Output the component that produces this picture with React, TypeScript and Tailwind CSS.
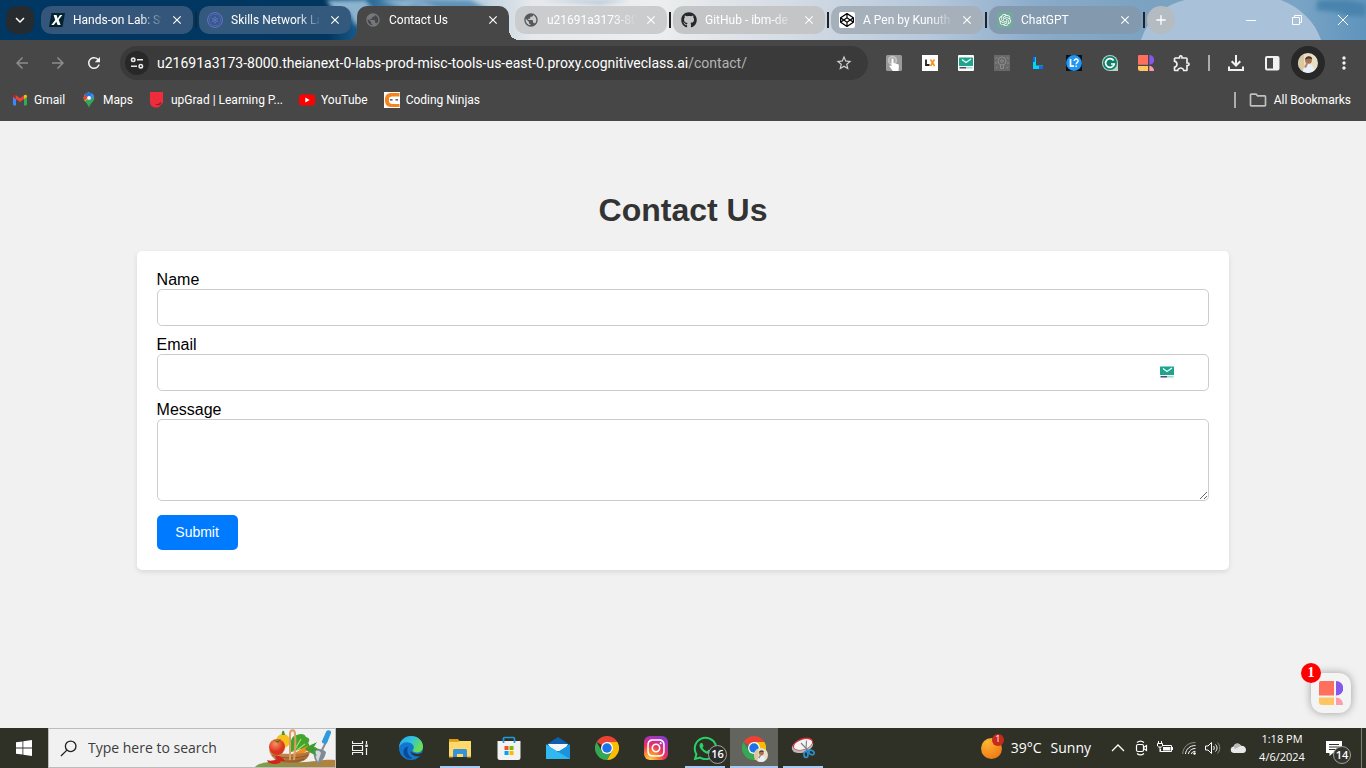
import type { ReactNode } from "react";
import {
  MdArrowBack,
  MdArrowForward,
  MdClose,
  MdKeyboardArrowDown,
  MdMoreVert,
  MdOutlineExtension,
  MdOutlineFolder,
  MdPublic,
  MdRefresh,
  MdStarBorder,
  MdAdd,
} from "react-icons/md";
import { FaCodepen, FaGithub, FaInstagram, FaWhatsapp } from "react-icons/fa";
import { SiOpenai } from "react-icons/si";

/* ---------- small drawings ---------- */

function LabIcon() {
  return (
    <svg viewBox="0 0 16 16" className="size-4 shrink-0">
      <path d="M2.5 1H16l-2.5 14H0z" fill="#04232e" />
      <path d="M4.6 3h3l1 3.4L11 3h2.4L9.7 7.8l1.9 5.2h-3L7.3 9.7 4.8 13H2.3l3.9-5.1z" fill="#fff" />
    </svg>
  );
}

function SkillsIcon() {
  return (
    <svg viewBox="0 0 16 16" className="size-4 shrink-0" fill="none" stroke="#6a70dc">
      <circle cx="8" cy="8" r="7.4" fill="#33597d" />
      <circle cx="8" cy="8" r="5.6" strokeWidth=".5" />
      <path d="M8 4v8M4.5 6l7 4M11.500 6l-7 4" strokeWidth=".7" />
      <circle cx="8" cy="8" r="2.500" strokeWidth=".5" />
    </svg>
  );
}

function TuneIcon() {
  return (
    <svg viewBox="0 0 16 16" className="size-4" fill="none" stroke="#e8e8e8" strokeWidth="1.6">
      <circle cx="4.2" cy="4.8" r="1.7" />
      <path d="M8 4.8h6M2 11.2h6" />
      <circle cx="11.8" cy="11.2" r="1.7" />
    </svg>
  );
}

function GmailIcon() {
  return (
    <svg viewBox="0 0 16 16" className="size-4 shrink-0">
      <path d="M1 4.5 4 6.7V13.500H2a1 1 0 0 1-1-1z" fill="#4285f4" />
      <path d="M15 4.500 12 6.700V13.500h2a1 1 0 0 0 1-1z" fill="#34a853" />
      <path d="M4 3.200 8 6.300l4-3.100v3.900l-4 3-4-3z" fill="#ea4335" />
      <path d="M1 4.500C1 2.600 2.800 2.200 4 3.200v3.900L1 4.900z" fill="#c5221f" />
      <path d="M15 4.500c0-1.900-1.800-2.300-3-1.300v3.900l3-2.200z" fill="#fbbc04" />
    </svg>
  );
}

function MapsIcon() {
  return (
    <svg viewBox="0 0 16 16" className="size-4 shrink-0">
      <clipPath id="pin">
        <path d="M8 .5a5.300 5.300 0 0 0-5.300 5.400C2.700 9.500 6.300 10.500 8 15.500c1.700-5 5.300-6 5.300-9.600A5.300 5.300 0 0 0 8 .5z" />
      </clipPath>
      <g clipPath="url(#pin)">
        <rect width="16" height="16" fill="#34a853" />
        <path d="M0 0h8v5L1 13z" fill="#fbbc04" />
        <path d="M0 0h5l3 5-5 4H0z" fill="#ea4335" />
        <path d="M4 0h9L8 6 3.500 2.500z" fill="#1a73e8" />
        <path d="M12 0 7 6l2 3 5-6z" fill="#4285f4" />
      </g>
      <circle cx="8" cy="5.900" r="1.900" fill="#fff" />
    </svg>
  );
}

function UpgradIcon() {
  return (
    <svg viewBox="0 0 16 16" className="size-4 shrink-0">
      <path d="M1 0h13v10.500l-4.500 5H5.500C3 15 1 13 1 10z" fill="#ee2c3c" />
      <path d="M6 12c3 .5 5-.5 5.500-2.500l.6 1.500C11 13.500 8 14 6 12z" fill="#8f1f2a" />
    </svg>
  );
}

function YoutubeIcon() {
  return (
    <svg viewBox="0 0 16 16" className="size-4 shrink-0">
      <rect y="2.500" width="16" height="11" rx="3" fill="#f00" />
      <path d="m6.300 5.500 4.400 2.500-4.400 2.500z" fill="#fff" />
    </svg>
  );
}

function NinjaIcon() {
  return (
    <svg viewBox="0 0 16 16" className="size-4 shrink-0">
      <rect width="16" height="16" fill="#fff" />
      <path d="M15.500 1H7C2.500 1 1 4 1 8s1.500 7 6 7h8.500v-3H8c-2 0-2.800-1.300-2.800-4S6 4.500 8 4.500h7.500z" fill="#f5841f" />
      <path d="M5 5.500h11v4.800H5z" fill="#fff" />
      <path d="M6 7.200h2.500v1.400H6zM11.500 7.200H14v1.400h-2.500z" fill="#333" />
    </svg>
  );
}

function TapIcon() {
  return (
    <svg viewBox="0 0 16 16" className="size-4">
      <rect width="16" height="16" rx="1.500" fill="#9a9a9a" />
      <circle cx="6.500" cy="5.500" r="4.700" fill="#c4c4c4" />
      <circle cx="6.500" cy="5.500" r="3" fill="#a8a8a8" />
      <path d="M5.500 4.500c0-1.300 2-1.300 2 0V8l4.500 1.200c1 .4 1 1.200.8 2.300L12.500 16H6.800L3.200 11c.5-1 1.500-.7 2.300.2z" fill="#fff" />
    </svg>
  );
}

function LxIcon() {
  return (
    <svg viewBox="0 0 16 16" className="size-4">
      <rect width="16" height="16" fill="#fff" />
      <path d="M4 4.500v5.500h3.500" fill="none" stroke="#222" strokeWidth="1.800" />
      <path d="m8.500 4.500 4 6.500M12.500 4.500l-4 6.500" stroke="#f7941d" strokeWidth="1.700" />
    </svg>
  );
}

function TempMailIcon() {
  return (
    <svg viewBox="0 0 16 16" className="size-4">
      <rect width="16" height="16" rx="1" fill="#fbfbfb" />
      <rect x="1" y="2.500" width="14" height="8.500" rx=".5" fill="#1fa38c" />
      <path d="m4 4.500 4 3 5-3.500" fill="none" stroke="#e8fff9" strokeWidth="1.300" />
      <path d="M1.500 12.800H8" stroke="#29315a" strokeWidth="1.300" />
      <path d="M8 12.800h6.500" stroke="#7fd9c5" strokeWidth="1.300" />
    </svg>
  );
}

function BulbIcon() {
  return (
    <svg viewBox="0 0 16 16" className="size-4" fill="none" stroke="#8a8a8a">
      <rect width="16" height="16" fill="#686868" stroke="none" />
      <circle cx="8" cy="6" r="4" />
      <circle cx="8" cy="6" r="1.300" />
      <path d="M6.500 9.500v4h3v-4M3 2 1.500 4M2 7v2M13 2l1.500 2M14 7v2M2 13l1.500-1M14 13l-1.500-1" />
    </svg>
  );
}

function CyanLIcon() {
  return (
    <svg viewBox="0 0 16 16" className="size-4">
      <path d="M3 2h3v8.500h7V14H3z" fill="#00d5ff" />
      <path d="M3 2h2v5H3zM9 11h4v3H9z" fill="#0a6cf0" />
    </svg>
  );
}

function QuizIcon() {
  return (
    <svg viewBox="0 0 16 16" className="size-4">
      <rect width="16" height="16" fill="#07121c" />
      <circle cx="8" cy="8" r="7.900" fill="#2196f3" />
      <path d="M4.500 4v7.200H8" fill="none" stroke="#fff" strokeWidth="1.700" />
      <path d="M8.300 6c0-2.700 4-2.500 3.800 0-.1 1.400-1.900 1.500-1.900 3.300M10.200 10.600v1.500" fill="none" stroke="#fff" strokeWidth="1.500" />
    </svg>
  );
}

function GrammarlyIcon() {
  return (
    <svg viewBox="0 0 16 16" className="size-4">
      <path d="M8 0a8 8 0 0 1 8 8v8H8A8 8 0 0 1 8 0z" fill="#b5d4cb" />
      <circle cx="8" cy="8" r="7" fill="#0c7e65" />
      <path d="M11.600 5.500A4.400 4.400 0 1 0 12.300 9H9" fill="none" stroke="#fff" strokeWidth="1.700" />
    </svg>
  );
}

function BlocksIcon({ className }: { className: string }) {
  return (
    <svg viewBox="0 0 24 24" className={className}>
      <path d="M2 0h13v14.500H0V2a2 2 0 0 1 2-2z" fill="#ff6f5e" />
      <path d="M17 0a7.250 7.250 0 0 1 0 14.500z" fill="#8458ea" />
      <path d="M0 16.500h15V24H3a3 3 0 0 1-3-3z" fill="#ffc562" />
      <path d="M17 16.500c4 0 7 3 7 7.500h-7z" fill="#ff9cab" />
    </svg>
  );
}

function DownloadIcon() {
  return (
    <svg viewBox="0 0 18 18" className="size-[18px]" fill="none" stroke="#f1f1f1" strokeWidth="2">
      <path d="M9 1v10M4.700 7.200 9 11.500l4.300-4.300M2 12.500V16h14v-3.500" />
    </svg>
  );
}

function PanelIcon() {
  return (
    <svg viewBox="0 0 16 16" className="size-4">
      <rect x="2" y="2" width="12.500" height="12.500" rx="1" fill="none" stroke="#f1f1f1" strokeWidth="2" />
      <path d="M9 2h5v12H9z" fill="#f1f1f1" />
    </svg>
  );
}

function Portrait({ className }: { className: string }) {
  return (
    <svg viewBox="0 0 20 20" className={className}>
      <clipPath id="face">
        <circle cx="10" cy="10" r="10" />
      </clipPath>
      <g clipPath="url(#face)">
        <rect width="20" height="20" fill="#e8dfc6" />
        <path d="M0 0h6v20H0z" fill="#d8c9a4" />
        <path d="M5 20c0-7 3-9 6-9s5 3 6 9z" fill="#e9eff8" />
        <circle cx="10.500" cy="7.500" r="3.300" fill="#a8714f" />
        <path d="M7 7c0-5 7.500-5 7.200-.5C12 5 9 5.200 7 7z" fill="#4b3527" />
        <path d="m6 14 3-5 1.500 1L8 15z" fill="#b88763" />
      </g>
    </svg>
  );
}

function Chrome({ className }: { className: string }) {
  return (
    <svg viewBox="0 0 48 48" className={className}>
      <path d="M24 24 3.200 12A24 24 0 0 1 44.800 12z" fill="#ea4335" />
      <path d="M24 36 34.400 30 24 48A24 24 0 0 1 3.200 12l10.400 18z" fill="#34a853" />
      <path d="M24 12h20.800A24 24 0 0 1 24 48l10.400-18z" fill="#fbbc04" />
      <circle cx="24" cy="24" r="12" fill="#fff" />
      <circle cx="24" cy="24" r="9.500" fill="#1a73e8" />
    </svg>
  );
}

function EdgeIcon() {
  return (
    <svg viewBox="0 0 24 24" className="size-6">
      <defs>
        <linearGradient id="edgeTop" x1="0" y1="0" x2="1" y2=".5">
          <stop offset="0" stopColor="#2aa6e8" />
          <stop offset=".5" stopColor="#2fc2df" />
          <stop offset="1" stopColor="#6be04f" />
        </linearGradient>
      </defs>
      <circle cx="12" cy="12" r="12" fill="#1277cf" />
      <path d="M0 11.500C.5 4.500 5.800 0 12.200 0 19 0 24 5 24 10.400c0 4-3 6-6.200 6-2.500 0-4.200-.9-4.200-1.800 0-.7 1.200-1.100 1.200-3.100 0-3-3.200-5.200-7-5.200-3.500 0-6.300 1.800-7.800 5.200z" fill="url(#edgeTop)" />
      <path d="M9.500 10.500c-2.200 2.500-1.700 8.500 4 11.800-4.500 1.700-9-1.700-9-6.300 0-3.500 2.200-5.200 5-5.500z" fill="#0b4a94" />
      <path d="M24 17.500c-2 3-6 3.300-8.700 2.200-2.800-1.100-4-3.100-3.800-5.200.1 1.800 3 3.400 6.300 3.400 2.500 0 4.200-.5 6.200-2z" fill="#2f3127" />
    </svg>
  );
}

function ExplorerIcon() {
  return (
    <svg viewBox="0 0 24 24" className="size-6">
      <path d="M1 3h9l1.500 2H1z" fill="#dd9a10" />
      <path d="M1 5h22v16H1z" fill="#ffd96b" />
      <path d="M1 4.500h9l1.500 1.500H1z" fill="#e6a71c" />
      <path d="M5 21v-6.500A1.500 1.500 0 0 1 6.500 13h11a1.500 1.500 0 0 1 1.500 1.500V21h-4v-3H9v3z" fill="#3593d6" />
      <path d="M1 20h4v1.500H1zM19 20h4v1.500h-4z" fill="#e3b23c" />
    </svg>
  );
}

function StoreIcon() {
  return (
    <svg viewBox="0 0 24 24" className="size-6">
      <path d="M6.500 7V2.500A1 1 0 0 1 7.500 1.500h9a1 1 0 0 1 1 1V7" fill="none" stroke="#1d9bdc" strokeWidth="1.700" />
      <path d="M.5 5h23v16.500A2.500 2.500 0 0 1 21 24H3a2.500 2.500 0 0 1-2.500-2.500z" fill="#f2f2f2" />
      <path d="M6.500 5v2M17.500 5v2" stroke="#1d9bdc" strokeWidth="1.700" />
      <path d="M7.500 10h4v4h-4z" fill="#f25022" />
      <path d="M12.500 10h4v4h-4z" fill="#7fba00" />
      <path d="M7.500 15h4v4h-4z" fill="#00a4ef" />
      <path d="M12.500 15h4v4h-4z" fill="#ffb900" />
    </svg>
  );
}

function MailIcon() {
  return (
    <svg viewBox="0 0 24 24" className="size-6">
      <path d="M0 9 12 1l12 8v4H0z" fill="#0f5fae" />
      <path d="M2 8h20l-4 7H6z" fill="#f3f5f7" />
      <path d="M0 8.500 12 16l12-7.500V23H0z" fill="#2fb4f0" />
      <path d="M24 8.500V23H0z" fill="#1b92dd" />
      <path d="M0 8.500 24 23H0z" fill="#30b8f3" />
    </svg>
  );
}

function InstagramTile() {
  return (
    <span className="flex size-6 items-center justify-center rounded-md bg-[radial-gradient(circle_at_25%_100%,#ffd35a_0%,#fb8b2e_25%,#e8325f_50%,#b730b0_72%,#6a45d8_100%)] text-white">
      <FaInstagram className="size-5" />
    </span>
  );
}

function SnipIcon() {
  return (
    <svg viewBox="0 0 24 24" className="size-6">
      <ellipse cx="11.500" cy="10" rx="11" ry="6.500" transform="rotate(-18 11.500 10)" fill="#b9b9b9" />
      <ellipse cx="12" cy="8" rx="10.500" ry="5.800" transform="rotate(-18 12 8)" fill="#d92f35" />
      <ellipse cx="12" cy="8.500" rx="9.500" ry="4.800" transform="rotate(-18 12 8.500)" fill="#f4f4f4" />
      <path d="m10 7 7 7.500M15.500 4.500l-.5 10" stroke="#7c858c" strokeWidth="1.200" />
      <g fill="none" stroke="#2b8fd0" strokeWidth="1.700">
        <path d="m15 14 4 .5" />
        <ellipse cx="15" cy="18.500" rx="2" ry="3" />
        <ellipse cx="20.500" cy="16.500" rx="2.800" ry="2" transform="rotate(30 20.500 16.500)" />
      </g>
    </svg>
  );
}

function TaskViewIcon() {
  return (
    <svg viewBox="0 0 16 16" className="size-4" fill="none" stroke="#f1f1f1">
      <path d="M.5 1v2.500h10V1M.5 15v-2.500h10V15M.5 5.500h10v5H.5zM14.500 1v3M14.500 8v7" strokeWidth="1.200" />
      <path d="M13.300 4.500h2.500V7h-2.500z" fill="#f1f1f1" stroke="none" />
    </svg>
  );
}

function BasketArt() {
  return (
    <svg viewBox="0 0 80 38" className="h-[38px] w-20 shrink-0">
      <defs>
        <linearGradient id="hill" x1="0" x2="1">
          <stop offset="0" stopColor="#78a24a" />
          <stop offset=".5" stopColor="#9a8a45" />
          <stop offset="1" stopColor="#b5803c" />
        </linearGradient>
        <radialGradient id="tomato" cx=".4" cy=".3">
          <stop offset="0" stopColor="#ff9060" />
          <stop offset="1" stopColor="#d9341e" />
        </radialGradient>
        <linearGradient id="wicker" x1="0" x2="1" y1="0" y2="1">
          <stop offset="0" stopColor="#d79a5c" />
          <stop offset="1" stopColor="#9a5c28" />
        </linearGradient>
      </defs>
      <path d="M0 38c5-6 22-6 40-5 16 1 28-3 40-2v7z" fill="url(#hill)" />
      <path d="m72 11-5 10" stroke="#8b8b8b" strokeWidth="2" />
      <path d="M71 3c1-3 6-2 5 1l-4 10c-2 2-6 0-5-2z" fill="#2f9ae0" />
      <path d="M59 20c4-1 10 0 12 3-1 6-4 9-8 12-4-4-5-9-4-15z" fill="#7f8b96" />
      <path d="M61 21c2 0 4 1 5 3l-3 9c-2-3-3-7-2-12z" fill="#d3dade" />
      <path d="M36 23c-2-8 0-17 6-17 4-2 8-1 9 2 4 1 4 4 2 6 3 2 0 5-3 5z" fill="#44a52d" />
      <path d="m39 22 7-12M42 21l8-6" stroke="#a6d86c" strokeWidth="1.300" />
      <path d="m36 26 16-9c3-1 5 2 2 4L42 27z" fill="#f58a1f" />
      <path d="M50 20c3-4 7-4 12-7l-3 5c2 0 4 2 5 3l-5 1 3 5-8-4z" fill="#3f9a30" />
      <circle cx="28" cy="12" r="7" fill="#f8c01c" />
      <path d="M27 6c-1-3 1-5 2-4l1 4z" fill="#48962f" />
      <path d="M14 21c9 5 30 5 41 1-1 9-8 12-20 12s-19-4-21-13z" fill="url(#wicker)" />
      <path d="M17 26c10 4 26 4 36 0M20 30c9 3 22 3 29 0" stroke="#8b5122" strokeWidth=".8" fill="none" />
      <circle cx="22" cy="18" r="8" fill="url(#tomato)" />
      <path d="m18 11 4 1 4-2-3 4z" fill="#397f2b" />
      <path d="M35 31V5c0-5 5-5 5 0 1 9 0 17-1 26" fill="none" stroke="#d9a065" strokeWidth="2" />
      <path d="M12 31c5 2 7-1 12 0 3 2 2 3-3 4-5 0-8-1-9-4zM20 27c4-1 8 2 10 5-4 1-9-1-10-5z" fill="#d6211c" />
    </svg>
  );
}

/* ---------- browser window ---------- */

function Sky() {
  return (
    <svg
      viewBox="0 0 1366 40"
      preserveAspectRatio="none"
      aria-hidden="true"
      className="pointer-events-none absolute inset-0 h-full w-full"
    >
      <defs>
        <linearGradient id="sky">
          <stop offset="0" stopColor="#003763" />
          <stop offset=".24" stopColor="#01375f" />
          <stop offset=".265" stopColor="#1c5f90" />
          <stop offset=".32" stopColor="#9bbbd3" />
          <stop offset=".39" stopColor="#e6e9ec" />
          <stop offset=".48" stopColor="#eceeef" />
          <stop offset=".56" stopColor="#d9dfe6" />
          <stop offset=".68" stopColor="#b6c8dc" />
          <stop offset=".76" stopColor="#8aabca" />
          <stop offset=".84" stopColor="#7ba2c1" />
          <stop offset=".95" stopColor="#79a4c5" />
          <stop offset="1" stopColor="#5f94bd" />
        </linearGradient>
        <filter id="soft">
          <feGaussianBlur stdDeviation="2" />
        </filter>
      </defs>
      <rect width="1366" height="40" fill="url(#sky)" />
      <g filter="url(#soft)">
        <path d="M326 0h40l8 12-18 14-8-14-14-2zM380 0h40l-14 8z" fill="#8cb4cf" />
        <path d="M420 0h50l20 10h-50z" fill="#5f93b8" />
        <path d="M1318 0h30l18 4v12h-18l-12-4-20-2z" fill="#4a84ae" />
        <path d="M540 0h90l-30 5z" fill="#b9c9d8" />
      </g>
      <path d="M1141 40c8-24 24-35 44-40h96c20 8 34 22 40 40z" fill="#aac2d9" />
    </svg>
  );
}

type TabInfo = { title: string; icon: ReactNode; tone: string };

const tabs: TabInfo[] = [
  { title: "Hands-on Lab: St", icon: <LabIcon />, tone: "bg-[#33567a] text-white" },
  { title: "Skills Network La", icon: <SkillsIcon />, tone: "bg-[#33597d] text-white" },
  { title: "Contact Us", icon: <MdPublic className="size-4 shrink-0 text-[#74787c]" />, tone: "" },
  { title: "u21691a3173-80", icon: <MdPublic className="size-4 shrink-0 text-[#55585c]" />, tone: "bg-[#cbcccd] text-white" },
  { title: "GitHub - ibm-de", icon: <FaGithub className="size-4 shrink-0 text-[#24292f]" />, tone: "bg-[#c3c5c7] text-white" },
  {
    title: "A Pen by Kunuth",
    icon: (
      <span className="flex size-4 shrink-0 items-center justify-center rounded-xs bg-white text-black">
        <FaCodepen className="size-3.5" />
      </span>
    ),
    tone: "bg-[#a6b0bb] text-white",
  },
  {
    title: "ChatGPT",
    icon: (
      <span className="flex size-4 shrink-0 items-center justify-center rounded-xs bg-[#74aa9c] text-white">
        <SiOpenai className="size-3" />
      </span>
    ),
    tone: "bg-[#8299ae] text-white",
  },
];

function Tab({ tab }: { tab: TabInfo }) {
  const active = tab.title === "Contact Us";
  return (
    <div
      className={
        active
          ? "relative flex h-[34px] w-[152px] items-center gap-2 self-end rounded-t-[10px] bg-[#474747] px-2 pb-1.5 text-white before:absolute before:bottom-0 before:-left-2.5 before:size-2.5 before:bg-[radial-gradient(circle_at_0_0,transparent_10px,#474747_10px)] after:absolute after:-right-2.5 after:bottom-0 after:size-2.5 after:bg-[radial-gradient(circle_at_100%_0,transparent_10px,#474747_10px)]"
          : `flex h-7 w-[152px] items-center gap-2 rounded-[10px] px-2 ${tab.tone}`
      }
    >
      {tab.icon}
      <span className="min-w-0 flex-1 whitespace-nowrap [mask-image:linear-gradient(to_right,#000_75%,rgba(0,0,0,0.15))]">
        {tab.title}
      </span>
      <button type="button" aria-label={`Close ${tab.title}`} className="shrink-0">
        <MdClose className="size-4 p-px" />
      </button>
    </div>
  );
}

const separators = [
  "bg-[#14283a]",
  "bg-transparent",
  "bg-transparent",
  "bg-[#222]",
  "bg-[#222]",
  "bg-[#222]",
  "bg-[#222]",
];

function TabStrip() {
  return (
    <header className="relative h-10 font-[Roboto,'Open_Sans',sans-serif] text-xs">
      <Sky />
      <div className="relative flex h-full items-center pl-1.5">
        <button
          type="button"
          aria-label="Search tabs"
          className="mr-[7px] flex size-7 items-center justify-center rounded-[10px] bg-[#262b2f] text-white"
        >
          <MdKeyboardArrowDown className="size-[18px]" />
        </button>
        {tabs.map((tab, i) => (
          <div key={tab.title} className="flex h-full items-center">
            <Tab tab={tab} />
            <span className={`mx-0.5 h-4 w-0.5 ${separators[i]}`} />
          </div>
        ))}
        <button
          type="button"
          aria-label="New tab"
          className="flex size-7 items-center justify-center rounded-full bg-[#b4bbc1] text-white"
        >
          <MdAdd className="size-4" />
        </button>
        <div className="ml-auto flex h-full text-white">
          <button type="button" aria-label="Minimize" className="flex w-[46px] items-center justify-center">
            <svg viewBox="0 0 10 10" className="size-2.5" stroke="currentColor">
              <path d="M0 5.500h10" />
            </svg>
          </button>
          <button type="button" aria-label="Restore" className="flex w-[46px] items-center justify-center">
            <svg viewBox="0 0 10 10" className="size-2.5" stroke="currentColor" fill="none">
              <path d="M.5 2.500h7v7h-7zM2.500 2V.5h7v7H8" />
            </svg>
          </button>
          <button type="button" aria-label="Close window" className="flex w-[46px] items-center justify-center">
            <svg viewBox="0 0 10 10" className="size-2.5" stroke="currentColor">
              <path d="m0 0 10 10M10 0 0 10" />
            </svg>
          </button>
        </div>
      </div>
    </header>
  );
}

function ToolButton({ label, children }: { label: string; children: ReactNode }) {
  return (
    <button type="button" aria-label={label} className="flex h-9 w-9 shrink-0 items-center justify-center">
      {children}
    </button>
  );
}

function Toolbar() {
  return (
    <div className="flex h-[46px] items-center bg-[#474747] px-1 text-[#f1f1f1]">
      <ToolButton label="Back">
        <MdArrowBack className="size-[18px] text-[#8d8d8d]" />
      </ToolButton>
      <ToolButton label="Forward">
        <MdArrowForward className="size-[18px] text-[#8d8d8d]" />
      </ToolButton>
      <ToolButton label="Reload">
        <MdRefresh className="size-[18px]" />
      </ToolButton>
      <div className="mx-2 flex h-[34px] min-w-0 flex-1 items-center rounded-full bg-[#3a3a3a] pr-[15px] pl-[5px]">
        <button
          type="button"
          aria-label="View site information"
          className="mr-2 flex size-6 items-center justify-center rounded-full bg-[#282828]"
        >
          <TuneIcon />
        </button>
        <a
          href="#contact"
          className="min-w-0 flex-1 truncate font-[Roboto,'Open_Sans',sans-serif] text-sm text-[#b4b4b4]"
        >
          <span className="text-white">
            u21691a3173-8000.theianext-0-labs-prod-misc-tools-us-east-0.proxy.cognitiveclass.ai
          </span>
          /contact/
        </a>
        <button type="button" aria-label="Bookmark this tab">
          <MdStarBorder className="size-[18px] text-[#d0d0d0]" />
        </button>
      </div>
      <ToolButton label="Tap extension"><TapIcon /></ToolButton>
      <ToolButton label="LX extension"><LxIcon /></ToolButton>
      <ToolButton label="Temp mail"><TempMailIcon /></ToolButton>
      <ToolButton label="Ideas"><BulbIcon /></ToolButton>
      <ToolButton label="L extension"><CyanLIcon /></ToolButton>
      <ToolButton label="Quiz extension"><QuizIcon /></ToolButton>
      <ToolButton label="Grammarly"><GrammarlyIcon /></ToolButton>
      <ToolButton label="Blocks"><BlocksIcon className="size-4" /></ToolButton>
      <ToolButton label="Extensions"><MdOutlineExtension className="size-5" /></ToolButton>
      <span className="mx-2 h-4 w-0.5 bg-[#a9adb1]" />
      <ToolButton label="Downloads"><DownloadIcon /></ToolButton>
      <ToolButton label="Side panel"><PanelIcon /></ToolButton>
      <ToolButton label="Profile">
        <span className="flex size-[34px] items-center justify-center rounded-full bg-[#282828]">
          <Portrait className="size-5" />
        </span>
      </ToolButton>
      <ToolButton label="Menu"><MdMoreVert className="size-5" /></ToolButton>
    </div>
  );
}

const bookmarks = [
  { name: "Gmail", icon: <GmailIcon /> },
  { name: "Maps", icon: <MapsIcon /> },
  { name: "upGrad | Learning P...", icon: <UpgradIcon /> },
  { name: "YouTube", icon: <YoutubeIcon /> },
  { name: "Coding Ninjas", icon: <NinjaIcon /> },
];

function BookmarksBar() {
  return (
    <nav className="flex h-[35px] items-center gap-4 bg-[#474747] pr-[15px] pb-[7px] pl-3 font-[Roboto,'Open_Sans',sans-serif] text-xs text-white">
      {bookmarks.map((b) => (
        <a key={b.name} href="#bookmark" className="flex items-center gap-1.5 whitespace-nowrap">
          {b.icon}
          {b.name}
        </a>
      ))}
      <span className="ml-auto h-4 w-0.5 bg-[#a9adb1]" />
      <a href="#bookmarks" className="-ml-1 flex items-center gap-1.5">
        <MdOutlineFolder className="size-5 text-[#c0c0c0]" />
        All Bookmarks
      </a>
    </nav>
  );
}

/* ---------- page ---------- */

function ContactPage() {
  const field = "block w-full rounded-[5px] border border-[#ccc] bg-white p-2.5 text-[13px]";
  return (
    <main className="relative flex-1 bg-[#f1f1f1] pt-[71px] font-['Liberation_Sans',Arial,sans-serif]">
      <h1 className="mb-[22px] text-center text-[32px] leading-[37px] font-bold text-[#333]">Contact Us</h1>
      <form
        className="mx-auto w-4/5 rounded-[5px] bg-white p-5 text-base leading-[18px] text-black shadow-[0_2px_5px_rgba(0,0,0,0.1)]"
        onSubmit={(e) => e.preventDefault()}
      >
        <label htmlFor="name" className="block">Name</label>
        <input id="name" type="text" className={`${field} mb-2.5 h-[37px]`} />
        <label htmlFor="email" className="block">Email</label>
        <div className="relative mb-2.5">
          <input id="email" type="email" className={`${field} h-[37px]`} />
          <span className="absolute top-2.5 right-[34px]">
            <TempMailIcon />
          </span>
        </div>
        <label htmlFor="message" className="block">Message</label>
        <textarea id="message" className={`${field} mb-3.5 h-[82px] resize`} />
        <button type="submit" className="h-[35px] w-[81px] rounded-[5px] bg-[#007bff] text-sm leading-[15px] text-white">
          Submit
        </button>
      </form>
      <button
        type="button"
        aria-label="Open assistant"
        className="absolute right-[15px] bottom-[15px] flex size-10 items-center justify-center rounded-xl bg-[#f4f4f4] shadow-[0_0_8px_rgba(0,0,0,0.35)]"
      >
        <BlocksIcon className="size-6" />
        <span className="absolute -top-2.5 -left-2.5 flex size-5 items-center justify-center rounded-full bg-[#f00] font-['Liberation_Serif',serif] text-sm font-bold text-white">
          1
        </span>
      </button>
    </main>
  );
}

/* ---------- taskbar ---------- */

type AppEntry = { name: string; icon: ReactNode; state?: "open" | "active" };

const apps: AppEntry[] = [
  { name: "Edge", icon: <EdgeIcon /> },
  { name: "File Explorer", icon: <ExplorerIcon />, state: "open" },
  { name: "Store", icon: <StoreIcon /> },
  { name: "Mail", icon: <MailIcon /> },
  { name: "Chrome", icon: <Chrome className="size-6" /> },
  { name: "Instagram", icon: <InstagramTile /> },
  {
    name: "WhatsApp",
    icon: (
      <>
        <FaWhatsapp className="size-[27px] text-[#25d366]" />
        <span className="absolute right-[2px] bottom-1 flex size-[19px] items-center justify-center rounded-full border border-[#a0a0a0] bg-[#2b2d2b] text-[11px] font-semibold text-white">
          16
        </span>
      </>
    ),
    state: "open",
  },
  {
    name: "Chrome profile",
    icon: (
      <>
        <Chrome className="size-6" />
        <Portrait className="absolute right-2.5 bottom-1.5 size-3.5" />
      </>
    ),
    state: "active",
  },
  { name: "Snipping Tool", icon: <SnipIcon />, state: "open" },
];

function Tray() {
  return (
    <div className="ml-auto flex h-full items-center text-white">
      <button type="button" className="flex items-center gap-[9px] text-sm">
        <span className="relative size-[21px] rounded-full bg-[radial-gradient(circle_at_30%_20%,#fbb733,#ee6a10)]">
          <span className="absolute -top-1 -right-0.5 flex size-3 items-center justify-center rounded-full bg-[#c42b1c] text-[9px]">
            1
          </span>
        </span>
        <span>39°C</span>
        <span>Sunny</span>
      </button>
      <div className="ml-5 flex items-center gap-[9px]">
        <svg viewBox="0 0 14 14" className="size-3.5" fill="none" stroke="#fff" strokeWidth="1.300">
          <path d="m1 10 6-6 6 6" />
        </svg>
        <svg viewBox="0 0 14 16" className="h-4 w-3.5" fill="none" stroke="#fff" strokeWidth="1.200">
          <rect x="2.500" y="4.500" width="7" height="7" rx="1.500" />
          <path d="m9.500 7.500 3-2v5l-3-2M3 2.500C5 .8 8 .8 10 2.500M3 13.500c2 1.700 5 1.700 7 0" />
        </svg>
        <svg viewBox="0 0 16 14" className="h-3.5 w-4" fill="none" stroke="#fff">
          <path d="M5.500 4.500h9v6h-11V8M1.500 0v2.500M4.500 0v2.500M.5 2.500h5V5c-.5 1.500-4.500 1.500-5 0zM3 6v5" />
          <path d="M6 6h7.500v3.500H6z" fill="#fff" stroke="none" />
          <path d="M15.500 6v3" />
        </svg>
        <svg viewBox="0 0 14 14" className="size-3.5" fill="none" stroke="#fff">
          <path d="M.7 13C1 6 6 1.500 13.500 1.500" stroke="#8b8d86" />
          <path d="M3.500 13C4 8 8 4.500 13.500 4.500M6.500 13c.3-3 3-5.500 7-5.500M9.500 13c0-1.500 1.500-2.700 4-2.700" />
          <circle cx="12.500" cy="12.500" r="1.200" fill="#fff" stroke="none" />
        </svg>
        <svg viewBox="0 0 16 14" className="h-3.5 w-4" fill="none" stroke="#fff">
          <path d="M.5 5v4h2.500l3.500 3.500v-11L3 5zM8.500 5c1 1 1 3 0 4M10.500 3.500c2 2 2 5 0 7" />
          <path d="M12.500 1.500c3 3 3 8 0 11" stroke="#8b8d86" />
        </svg>
        <svg viewBox="0 0 16 10" className="h-2.5 w-4">
          <path d="M3.500 10a3.300 3.300 0 0 1 0-6.500C4.500 0 9-.6 11 2.800 14 2.500 16 4.500 16 7c0 2-1.500 3-3 3z" fill="#e8e8e8" />
          <path d="M3.500 3.500C4.500 0 9-.6 11 2.800L5 6z" fill="#b9bab6" />
        </svg>
      </div>
      <time className="ml-3 w-[48px] text-center text-[11px] leading-[18px] whitespace-nowrap">
        1:18 PM
        <br />
        4/6/2024
      </time>
      <button type="button" aria-label="Notifications" className="relative ml-5 h-full w-[25px]">
        <svg viewBox="0 0 16 15" className="h-[15px] w-4">
          <path d="M0 0h16v12H7l-3.500 3V12H0z" fill="#fff" />
          <path d="M3 3.500h10M3 6h10M3 8.500h7" stroke="#2f3127" />
        </svg>
        <span className="absolute right-0 bottom-1 flex size-[18px] items-center justify-center rounded-full border border-[#a0a0a0] bg-[#33352e] text-[11px] font-semibold">
          14
        </span>
      </button>
      <span className="mr-1 ml-2.5 h-full w-px bg-[#7d7f78]" />
    </div>
  );
}

function Taskbar() {
  return (
    <footer className="flex h-10 items-center bg-[#2f3127] text-[#f1f1f1]">
      <button type="button" aria-label="Start" className="flex h-full w-12 items-center justify-center">
        <svg viewBox="0 0 16 16" className="size-4" fill="#fff">
          <path d="m0 2.300 6.500-.9v6.200H0zM7.300 1.300 16 0v7.600H7.300zM0 8.400h6.500v6.200L0 13.700zM7.300 8.400H16V16l-8.700-1.300z" />
        </svg>
      </button>
      <label className="flex h-full w-72 items-center border border-[#bcbcbc] bg-[#f1f1f1] pl-[11px] text-sm">
        <svg viewBox="0 0 18 18" className="mr-[11px] size-[17px] shrink-0" fill="none" stroke="#222" strokeWidth="1.400">
          <circle cx="11.300" cy="6.700" r="5.600" />
          <path d="M7.300 10.700 1 17" />
        </svg>
        <input
          type="text"
          aria-label="Search"
          placeholder="Type here to search"
          className="min-w-0 flex-1 bg-transparent outline-none placeholder:text-[#3c3c3c]"
        />
        <BasketArt />
      </label>
      <button type="button" aria-label="Task view" className="mr-[3px] flex h-full w-12 items-center justify-center">
        <TaskViewIcon />
      </button>
      <div className="flex h-full gap-px">
        {apps.map((app) => (
          <button
            key={app.name}
            type="button"
            aria-label={app.name}
            className={`relative flex h-full w-12 items-center justify-center ${app.state === "active" ? "bg-[#63645d]" : ""}`}
          >
            {app.icon}
            {app.state && (
              <span
                className={`absolute bottom-0 h-0.5 bg-[#a9c9f5] ${app.state === "active" ? "inset-x-0" : "inset-x-1"}`}
              />
            )}
          </button>
        ))}
      </div>
      <Tray />
    </footer>
  );
}

export default function App() {
  return (
    <div className="flex min-h-screen flex-col font-['Open_Sans','Noto_Sans',sans-serif]">
      <TabStrip />
      <Toolbar />
      <BookmarksBar />
      <ContactPage />
      <Taskbar />
    </div>
  );
}
